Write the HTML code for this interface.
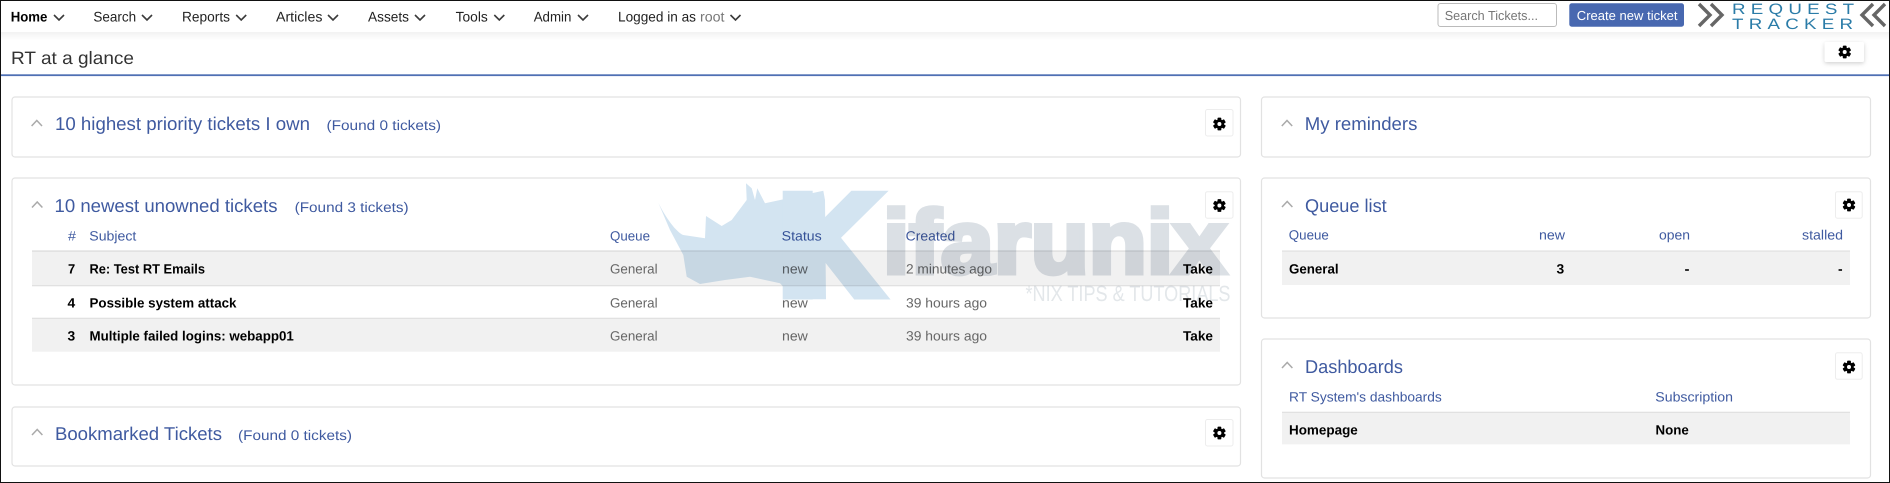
<!DOCTYPE html>
<html lang="en">
<head>
<meta charset="utf-8">
<title>RT at a glance</title>
<style>
html,body{margin:0;padding:0;background:#fff;width:1890px;height:483px;overflow:hidden}
svg{display:block;filter:blur(.3px)}
text{font-family:"Liberation Sans",sans-serif;text-rendering:geometricPrecision}
.nav{font-size:14px;fill:#222}
.title{font-size:18.5px;fill:#3f5aa0}
.found{font-size:14px;fill:#3f5aa0}
.th{font-size:13.5px;fill:#3f5aa0}
.b{font-size:13.5px;font-weight:bold;fill:#000}
.g{font-size:13.5px;fill:#666}
.panel{fill:#fff;stroke:#e2e2e2;stroke-width:1.2}
.row{fill:#f1f1f1}
.line{stroke:#dcdcdc;stroke-width:1}
.dn{fill:none;stroke:#3a3a3a;stroke-width:1.6}
.up{fill:none;stroke:#aaa;stroke-width:1.5}
.btn{fill:#fff;stroke:#ededed;stroke-width:1}
.chev{fill:none;stroke:#666;stroke-width:3.4}
.logo{font-size:15px;fill:#2b7ca8;letter-spacing:4.2px}
</style>
</head>
<body>
<svg xmlns="http://www.w3.org/2000/svg" width="1890" height="483" viewBox="0 0 1890 483">
<defs>
<linearGradient id="sh" x1="0" y1="0" x2="0" y2="1"><stop offset="0" stop-color="#f2f2f2"/><stop offset="1" stop-color="#fff"/></linearGradient>
<filter id="bs" x="-30%" y="-30%" width="160%" height="180%"><feDropShadow dx="0" dy="1.5" stdDeviation="2" flood-color="#000" flood-opacity=".18"/></filter>
<g id="gear">
<g fill="#000">
<rect x="-1.9" y="-6.4" width="3.8" height="12.8" rx=".8"/>
<rect x="-1.9" y="-6.4" width="3.8" height="12.8" rx=".8" transform="rotate(60)"/>
<rect x="-1.9" y="-6.4" width="3.8" height="12.8" rx=".8" transform="rotate(120)"/>
<circle r="4.7"/>
</g>
<circle r="2" fill="#fff"/>
</g>
<polyline id="d" class="dn" points="0,0 5,5 10,0"/>
<polyline id="u" class="up" points="0,5.5 5.2,0 10.4,5.5"/>
</defs>

<rect width="1890" height="483" fill="#fff"/>

<!-- top nav -->
<rect x="0" y="32" width="1890" height="8" fill="url(#sh)"/>
<text class="nav" x="10.7" y="21.5" style="font-weight:bold;fill:#000" textLength="36.7" lengthAdjust="spacingAndGlyphs">Home</text>
<use href="#d" x="54" y="15"/>
<text class="nav" x="93.4" y="21.5" textLength="42.8" lengthAdjust="spacingAndGlyphs">Search</text>
<use href="#d" x="142" y="15"/>
<text class="nav" x="182" y="21.5" textLength="48" lengthAdjust="spacingAndGlyphs">Reports</text>
<use href="#d" x="236.2" y="15"/>
<text class="nav" x="276" y="21.5" textLength="46.4" lengthAdjust="spacingAndGlyphs">Articles</text>
<use href="#d" x="328" y="15"/>
<text class="nav" x="368" y="21.5" textLength="41" lengthAdjust="spacingAndGlyphs">Assets</text>
<use href="#d" x="415" y="15"/>
<text class="nav" x="455.6" y="21.5" textLength="32.2" lengthAdjust="spacingAndGlyphs">Tools</text>
<use href="#d" x="494.3" y="15"/>
<text class="nav" x="533.7" y="21.5" textLength="37.7" lengthAdjust="spacingAndGlyphs">Admin</text>
<use href="#d" x="578" y="15"/>
<text class="nav" x="618" y="21.5" textLength="78" lengthAdjust="spacingAndGlyphs">Logged in as</text>
<text class="nav" x="700" y="21.5" style="fill:#777" textLength="24.5" lengthAdjust="spacingAndGlyphs">root</text>
<use href="#d" x="730.5" y="15"/>

<rect x="1438" y="3.5" width="118.5" height="23" rx="2.5" fill="#fff" stroke="#bbb" stroke-width="1"/>
<text x="1444.7" y="20.2" font-size="13" fill="#777" textLength="93.3" lengthAdjust="spacingAndGlyphs">Search Tickets...</text>
<rect x="1569.3" y="3.3" width="114.7" height="23.4" rx="2.5" fill="#4868b0"/>
<text x="1576.8" y="20.2" font-size="13" fill="#fff" textLength="100.7" lengthAdjust="spacingAndGlyphs">Create new ticket</text>

<polyline class="chev" points="1699,4 1710,15 1699,26"/>
<polyline class="chev" points="1711,4 1722,15 1711,26"/>
<text class="logo" transform="translate(1732,14.2) scale(1.25,1)">REQUEST</text>
<text class="logo" transform="translate(1732,28.8) scale(1.25,1)">TRACKER</text>
<polyline class="chev" points="1873,4 1862,15 1873,26"/>
<polyline class="chev" points="1885,4 1874,15 1885,26"/>

<!-- page heading -->
<text x="11" y="64" font-size="18" fill="#333" textLength="123" lengthAdjust="spacingAndGlyphs">RT at a glance</text>
<rect x="1824.5" y="42" width="39.5" height="20" rx="2" fill="#fff" filter="url(#bs)"/>
<use href="#gear" x="1844.7" y="52"/>
<rect x="0" y="74.3" width="1890" height="1.8" fill="#4f70b4"/>

<!-- left panels -->
<rect class="panel" x="12" y="97" width="1228.5" height="60" rx="3"/>
<use href="#u" x="31.6" y="120.5"/>
<text class="title" x="55" y="130" textLength="255" lengthAdjust="spacingAndGlyphs">10 highest priority tickets I own</text>
<text class="found" x="326.5" y="130" textLength="114.5" lengthAdjust="spacingAndGlyphs">(Found 0 tickets)</text>
<rect class="btn" x="1205.5" y="109.5" width="27.5" height="26.5" rx="2"/>
<use href="#gear" x="1219.4" y="124"/>

<rect class="panel" x="12" y="178" width="1228.5" height="207" rx="3"/>
<use href="#u" x="32" y="202"/>
<text class="title" x="54.5" y="212" textLength="223" lengthAdjust="spacingAndGlyphs">10 newest unowned tickets</text>
<text class="found" x="294.6" y="212" textLength="114" lengthAdjust="spacingAndGlyphs">(Found 3 tickets)</text>
<rect class="btn" x="1205.5" y="191.7" width="27.5" height="26.5" rx="2"/>
<use href="#gear" x="1219.4" y="205.5"/>
<text class="th" x="68" y="240.5" textLength="8" lengthAdjust="spacingAndGlyphs">#</text>
<text class="th" x="89.3" y="240.5" textLength="47" lengthAdjust="spacingAndGlyphs">Subject</text>
<text class="th" x="610" y="240.5" textLength="40" lengthAdjust="spacingAndGlyphs">Queue</text>
<text class="th" x="781.7" y="240.5" textLength="40" lengthAdjust="spacingAndGlyphs">Status</text>
<text class="th" x="905.7" y="240.5" textLength="49.5" lengthAdjust="spacingAndGlyphs">Created</text>
<rect class="row" x="32" y="251" width="1188" height="34.5"/>
<rect class="row" x="32" y="318" width="1188" height="33.7"/>
<line class="line" x1="32" x2="1220" y1="251" y2="251" style="stroke:#d4d4d4"/>
<line class="line" x1="32" x2="1220" y1="285.7" y2="285.7"/>
<line class="line" x1="32" x2="1220" y1="318.3" y2="318.3"/>

<text class="b" x="68" y="273.5" textLength="7.2" lengthAdjust="spacingAndGlyphs">7</text>
<text class="b" x="89.5" y="273.5" textLength="115.5" lengthAdjust="spacingAndGlyphs">Re: Test RT Emails</text>
<text class="g" x="610" y="273.5" textLength="47.6" lengthAdjust="spacingAndGlyphs">General</text>
<text class="g" x="782" y="273.5" textLength="25.8" lengthAdjust="spacingAndGlyphs">new</text>
<text class="g" x="906" y="273.5" textLength="86" lengthAdjust="spacingAndGlyphs">2 minutes ago</text>
<text class="b" x="1183" y="273.5" textLength="30" lengthAdjust="spacingAndGlyphs">Take</text>

<text class="b" x="67.5" y="307.5" textLength="7.7" lengthAdjust="spacingAndGlyphs">4</text>
<text class="b" x="89.5" y="307.5" textLength="147" lengthAdjust="spacingAndGlyphs">Possible system attack</text>
<text class="g" x="610" y="307.5" textLength="47.6" lengthAdjust="spacingAndGlyphs">General</text>
<text class="g" x="782" y="307.5" textLength="25.8" lengthAdjust="spacingAndGlyphs">new</text>
<text class="g" x="906" y="307.5" textLength="81" lengthAdjust="spacingAndGlyphs">39 hours ago</text>
<text class="b" x="1183" y="307.5" textLength="30" lengthAdjust="spacingAndGlyphs">Take</text>

<text class="b" x="67.5" y="340.5" textLength="7.7" lengthAdjust="spacingAndGlyphs">3</text>
<text class="b" x="89.5" y="340.5" textLength="204.3" lengthAdjust="spacingAndGlyphs">Multiple failed logins: webapp01</text>
<text class="g" x="610" y="340.5" textLength="47.6" lengthAdjust="spacingAndGlyphs">General</text>
<text class="g" x="782" y="340.5" textLength="25.8" lengthAdjust="spacingAndGlyphs">new</text>
<text class="g" x="906" y="340.5" textLength="81" lengthAdjust="spacingAndGlyphs">39 hours ago</text>
<text class="b" x="1183" y="340.5" textLength="30" lengthAdjust="spacingAndGlyphs">Take</text>

<rect class="panel" x="12" y="407" width="1228.5" height="59" rx="3"/>
<use href="#u" x="32" y="429.5"/>
<text class="title" x="55" y="440" textLength="167" lengthAdjust="spacingAndGlyphs">Bookmarked Tickets</text>
<text class="found" x="238" y="440" textLength="114" lengthAdjust="spacingAndGlyphs">(Found 0 tickets)</text>
<rect class="btn" x="1205.5" y="419.5" width="27.5" height="26.5" rx="2"/>
<use href="#gear" x="1219.4" y="433"/>

<!-- right panels -->
<rect class="panel" x="1261.5" y="97" width="609" height="60" rx="3"/>
<use href="#u" x="1281.8" y="120.5"/>
<text class="title" x="1304.8" y="130" textLength="112.6" lengthAdjust="spacingAndGlyphs">My reminders</text>

<rect class="panel" x="1261.5" y="178" width="609" height="140" rx="3"/>
<use href="#u" x="1282" y="201.5"/>
<text class="title" x="1305" y="212" textLength="81.7" lengthAdjust="spacingAndGlyphs">Queue list</text>
<rect class="btn" x="1835.5" y="191.7" width="26.7" height="26.5" rx="2"/>
<use href="#gear" x="1849" y="205"/>
<text class="th" x="1288.8" y="239.5" textLength="40" lengthAdjust="spacingAndGlyphs">Queue</text>
<text class="th" x="1539" y="239.5" textLength="26" lengthAdjust="spacingAndGlyphs">new</text>
<text class="th" x="1659" y="239.5" textLength="31" lengthAdjust="spacingAndGlyphs">open</text>
<text class="th" x="1802" y="239.5" textLength="41" lengthAdjust="spacingAndGlyphs">stalled</text>
<rect class="row" x="1282" y="251" width="568" height="34"/>
<line class="line" x1="1282" x2="1850" y1="251" y2="251"/>
<text class="b" x="1289" y="273.5" textLength="49.6" lengthAdjust="spacingAndGlyphs">General</text>
<text class="b" x="1556.5" y="273.5" textLength="7.7" lengthAdjust="spacingAndGlyphs">3</text>
<text class="b" x="1684.5" y="273.5" textLength="5" lengthAdjust="spacingAndGlyphs">-</text>
<text class="b" x="1838" y="273.5" textLength="4.6" lengthAdjust="spacingAndGlyphs">-</text>

<rect class="panel" x="1261.5" y="339" width="609" height="139" rx="3"/>
<use href="#u" x="1282" y="362.5"/>
<text class="title" x="1305" y="373" textLength="98" lengthAdjust="spacingAndGlyphs">Dashboards</text>
<rect class="btn" x="1835.5" y="352.8" width="26.7" height="26.5" rx="2"/>
<use href="#gear" x="1849" y="367"/>
<text class="th" x="1289" y="401.5" textLength="152.8" lengthAdjust="spacingAndGlyphs">RT System's dashboards</text>
<text class="th" x="1655.3" y="401.5" textLength="77.7" lengthAdjust="spacingAndGlyphs">Subscription</text>
<rect class="row" x="1282" y="412.3" width="568" height="32"/>
<line class="line" x1="1282" x2="1850" y1="412.3" y2="412.3"/>
<text class="b" x="1289" y="434.5" textLength="68.8" lengthAdjust="spacingAndGlyphs">Homepage</text>
<text class="b" x="1655.5" y="434.5" textLength="33.3" lengthAdjust="spacingAndGlyphs">None</text>

<!-- watermark -->
<g style="mix-blend-mode:multiply" fill="#d3e4f1" stroke="none">
<path d="M658.3 202.7 C668 222 678 233 683.3 235 L705 238.3 L706 216 L721.7 226 L731.7 220 L746.7 200 L746 183.3 L751.7 188.3 L755 200 L757.3 188.3 L765 203.3 L823.3 190.7 L825 200 L826 299.3 L786.7 299.3 L783.3 286.7 L780 283.3 L750 276.7 L725 280 L700 284 L686.7 276.7 L683.3 255 L670 230 Z"/>
<text x="777.5" y="295" stroke="#d3e4f1" stroke-width="9" style="font-size:145px;font-weight:bold" textLength="105" lengthAdjust="spacingAndGlyphs">K</text>
</g>
<g style="mix-blend-mode:multiply" fill="#dbe0e5">
<text x="883" y="273" stroke="#dbe0e5" stroke-width="5" style="font-size:90px;font-weight:bold" textLength="343" lengthAdjust="spacingAndGlyphs">ifarunix</text>
</g>
<text x="1025.5" y="301" font-size="22" fill="#e3e7ea" style="mix-blend-mode:multiply" textLength="205" lengthAdjust="spacingAndGlyphs">*NIX TIPS &amp; TUTORIALS</text>

<!-- outer frame -->
<rect x="0" y="0" width="1890" height="483" fill="none" stroke="#111" stroke-width="2"/>
</svg>
</body>
</html>
